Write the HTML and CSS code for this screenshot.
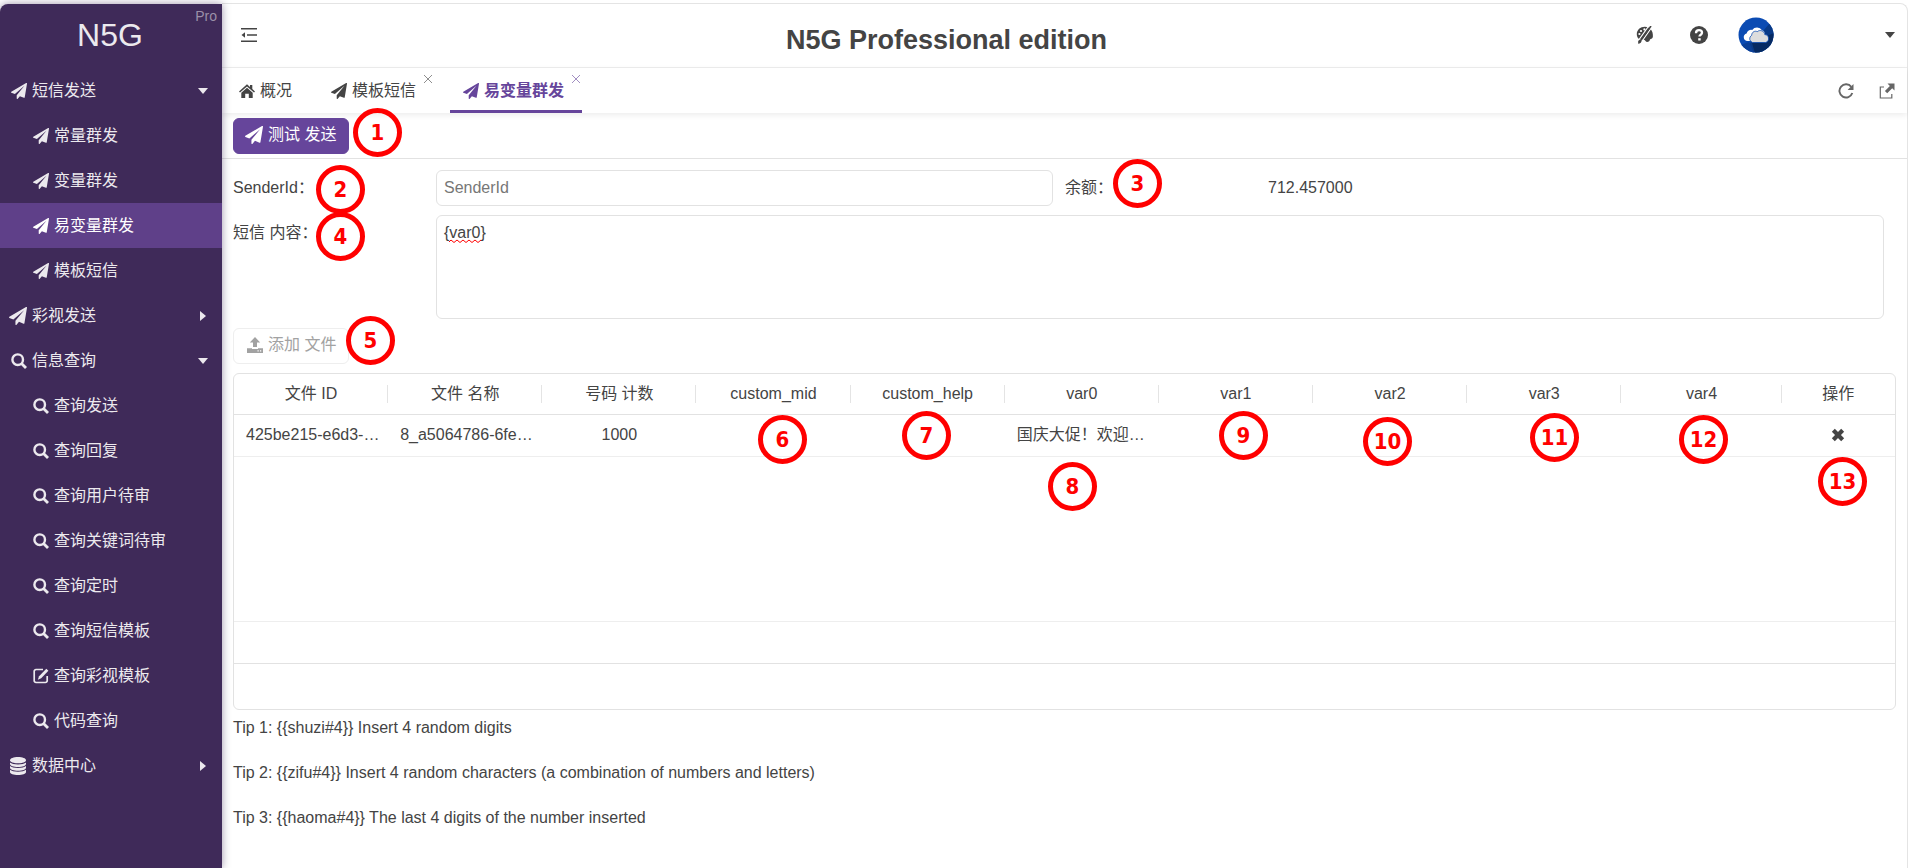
FILE: index.html
```html
<!DOCTYPE html>
<html lang="zh-CN">
<head>
<meta charset="utf-8">
<title>N5G Professional edition</title>
<link rel="stylesheet" href="styles.css">
</head>
<body>
<svg class="sprite" aria-hidden="true">
  <symbol id="plane" viewBox="0 0 1792 1792"><path d="M1764 11q33 24 27 64l-256 1536q-5 29-32 45-14 8-31 8-11 0-24-5l-453-185-242 295q-18 23-49 23-13 0-22-4-19-7-30.500-23.500t-11.500-36.500v-349l864-1059-1069 925-395-162q-37-14-40-55-2-40 32-59l1664-960q15-9 32-9 20 0 36 11z"/></symbol>
  <symbol id="search" viewBox="0 0 16 16"><circle cx="6.700" cy="6.700" r="5.300" fill="none" stroke="currentColor" stroke-width="2.400"/><path d="M10.500 10.500L15 15" stroke="currentColor" stroke-width="2.800"/></symbol>
  <symbol id="edit" viewBox="0 0 16 16"><path d="M10 1.500H3a1.800 1.800 0 0 0-1.800 1.800v9.400A1.800 1.800 0 0 0 3 14.500h9.400a1.800 1.800 0 0 0 1.800-1.800V8" fill="none" stroke="currentColor" stroke-width="1.700"/><path d="M13.300.7l2.100 2.100-7.200 7.400-3.400 1.500 1.300-3.500z"/></symbol>
  <symbol id="database" viewBox="0 0 16 18"><path d="M0 3.200C0 1.300 3.600 0 8 0s8 1.300 8 3.200S12.400 6.300 8 6.300 0 5 0 3.200z"/><path d="M0 5.400c1.400 1.300 4.400 2 8 2s6.600-.7 8-2v1.700c0 1.700-3.600 3-8 3s-8-1.300-8-3z"/><path d="M0 9.100c1.400 1.300 4.400 2 8 2s6.600-.7 8-2v1.700c0 1.700-3.600 3-8 3s-8-1.300-8-3z"/><path d="M0 12.800c1.400 1.300 4.400 2 8 2s6.600-.7 8-2v2.100C16 16.700 12.400 18 8 18s-8-1.300-8-3.100z"/></symbol>
  <symbol id="down" viewBox="0 0 10 6"><path d="M0 0h10L5 6z"/></symbol>
  <symbol id="right" viewBox="0 0 6 10"><path d="M0 0l6 5-6 5z"/></symbol>
</svg>
<div class="app">
  <aside class="sidebar">
    <div class="brand">N5G<span class="brand-tag">Pro</span></div>
    <nav class="menu">
      <a class="item" href="#"><svg class="icon"><use href="#plane"/></svg>短信发送<svg class="caret"><use href="#down"/></svg></a>
      <a class="item sub" href="#"><svg class="icon"><use href="#plane"/></svg>常量群发</a>
      <a class="item sub" href="#"><svg class="icon"><use href="#plane"/></svg>变量群发</a>
      <a class="item sub current" href="#"><svg class="icon"><use href="#plane"/></svg>易变量群发</a>
      <a class="item sub" href="#"><svg class="icon"><use href="#plane"/></svg>模板短信</a>
      <a class="item" href="#"><svg class="icon large"><use href="#plane"/></svg>彩视发送<svg class="caret"><use href="#right"/></svg></a>
      <a class="item" href="#"><svg class="icon"><use href="#search"/></svg>信息查询<svg class="caret"><use href="#down"/></svg></a>
      <a class="item sub" href="#"><svg class="icon"><use href="#search"/></svg>查询发送</a>
      <a class="item sub" href="#"><svg class="icon"><use href="#search"/></svg>查询回复</a>
      <a class="item sub" href="#"><svg class="icon"><use href="#search"/></svg>查询用户待审</a>
      <a class="item sub" href="#"><svg class="icon"><use href="#search"/></svg>查询关键词待审</a>
      <a class="item sub" href="#"><svg class="icon"><use href="#search"/></svg>查询定时</a>
      <a class="item sub" href="#"><svg class="icon"><use href="#search"/></svg>查询短信模板</a>
      <a class="item sub" href="#"><svg class="icon"><use href="#edit"/></svg>查询彩视模板</a>
      <a class="item sub" href="#"><svg class="icon"><use href="#search"/></svg>代码查询</a>
      <a class="item" href="#"><svg class="icon large"><use href="#database"/></svg>数据中心<svg class="caret"><use href="#right"/></svg></a>
    </nav>
  </aside>

  <main class="main">
    <header class="header">
      <button class="plain" type="button" aria-label="收起菜单"><svg class="icon" viewBox="0 0 16 16"><path d="M0 1h16v1.400H0zM6 7.300h10v1.400H6zM0 13.600h16V15H0zM4 5.300v5.400L.5 8z"/></svg></button>
      <h1 class="title">N5G Professional edition</h1>
      <div class="header-tools">
        <button class="plain" type="button" aria-label="主题"><svg class="icon large" viewBox="0 0 18 18"><path d="M8.800.8C4.300.8.800 4 .8 8c0 3.300 1.800 5.500 4.500 5.600 2 .1 3.600.2 4.400 1.600.7 1.200 2.400.8 3.400 0 .8-.7.5-1.900 1.500-2.300 1.300-.5 2.200-.7 2.300-2.500C17.300 5 14 .8 8.800.8z"/><g fill="#fff"><circle cx="3.400" cy="8" r="1.100"/><circle cx="5" cy="5" r="1.100"/><circle cx="8.400" cy="3.400" r="1.100"/></g><path d="M16.200.6L6.400 14.600M12.600.2L3 13.600" stroke="#fff" stroke-width="1.100"/><path d="M15 0L4.800 14.400" stroke="#444" stroke-width="1.600"/><path d="M2.200 15.200c.6-1.600 2.500-2 3.300-.9.500 1.900-1.300 3.300-3.500 3.500.5-.9-.1-1.700.2-2.600z"/></svg></button>
        <button class="plain" type="button" aria-label="帮助"><svg class="icon large" viewBox="0 0 18 18"><circle cx="9" cy="9" r="9"/><path d="M6 7.200C6 5 7.300 4.200 9 4.200s3 1 3 2.600c0 2-2.500 1.800-2.500 3.800" fill="none" stroke="#fff" stroke-width="2.300"/><path d="M8.200 12.200h2.500v2.300H8.200z" fill="#fff"/></svg></button>
        <button class="user" type="button" aria-label="用户">
          <svg class="avatar" viewBox="0 0 36 36"><defs><clipPath id="disc"><circle cx="18" cy="18" r="17.500"/></clipPath></defs><g clip-path="url(#disc)"><path d="M0 0h36v36H0z" fill="#0b4bb3"/><path d="M25 14L32 6l4 4v26H15l-4-9z" fill="#093a87"/><path d="M29 19l7-3v20H17l-3-10z" fill="#062a62"/><path d="M0 29l11-4 5 11H0z" fill="#0a3f97"/></g><path d="M9 24a3.900 3.900 0 0 1-.4-7.600 4.600 4.600 0 0 1 5.600-3.400 6 6 0 0 1 9.800.3c2 .3 2.700 2 2.700 3.600L17 24z" fill="#fff"/><path d="M14.600 25.500a3.900 3.900 0 0 1-.9-7.200c-.1-3.200 3.400-5 5.500-3.600 2.600-2.400 7.400-.8 7.600 2.900 4.100-.2 5.500 6.400 1 7.900z" fill="#ddd" stroke="#0b4bb3" stroke-width=".8"/></svg>
          <svg class="caret"><use href="#down"/></svg>
        </button>
      </div>
    </header>

    <div class="tabs">
      <div class="tab"><svg class="icon" viewBox="0 0 16 16"><path d="M8 1.200l3 2.700V2h2.300v4L16 8.500l-1 1.100L8 3.400 1 9.600 0 8.500z"/><path d="M8 4.700l5.700 5V15H9.800v-4.300H6.200V15H2.300V9.700z"/></svg><a href="#">概况</a></div>
      <div class="tab"><svg class="icon"><use href="#plane"/></svg><a href="#">模板短信</a><button class="close" type="button" aria-label="关闭"><svg viewBox="0 0 10 10"><path d="M1 1l8 8M9 1L1 9"/></svg></button></div>
      <div class="tab active"><svg class="icon"><use href="#plane"/></svg><a href="#">易变量群发</a><button class="close" type="button" aria-label="关闭"><svg viewBox="0 0 10 10"><path d="M1 1l8 8M9 1L1 9"/></svg></button></div>
      <div class="tab-tools">
        <button class="plain" type="button" aria-label="刷新"><svg class="icon" viewBox="0 0 16 16"><path d="M13.300 3.900A6.600 6.600 0 1 0 14.300 10" fill="none" stroke="currentColor" stroke-width="1.900"/><path d="M15.500 1v6H9.600z"/></svg></button>
        <button class="plain" type="button" aria-label="新窗口"><svg class="icon" viewBox="0 0 16 16"><path d="M5 4H1.300v11H12.800v-4" fill="none" stroke="currentColor" stroke-width="1.200"/><path d="M8.500.5h7v7l-2.300-2.300-5 5L5.900 8l5-5z"/></svg></button>
      </div>
    </div>

    <div class="toolbar">
      <button class="btn primary" type="button"><svg class="icon large"><use href="#plane"/></svg>测试 发送</button>
    </div>

    <form class="content">
      <div class="form">
        <label for="sender">SenderId：</label>
        <input class="field" id="sender" type="text" placeholder="SenderId">
        <span class="balance-label">余额：</span>
        <output class="balance">712.457000</output>
        <label for="body">短信 内容：</label>
        <div class="area">
          <textarea class="field" id="body" spellcheck="false">{var0}</textarea>
          <svg class="squiggle" viewBox="0 0 32 4" aria-hidden="true"><path d="M0 3l2-2 3 2.500L8 1l3 2.500L14 1l3 2.500L20 1l3 2.500L26 1l3 2.500L32 1" fill="none" stroke="#f00"/></svg>
        </div>
      </div>
      <div class="upload">
        <button class="btn" type="button" disabled><svg class="icon" viewBox="0 0 16 16"><path d="M8 0l5.200 5.500H10V10H6V5.500H2.800z"/><path fill-rule="evenodd" d="M0 11.200h5V12h6v-.8h5V16H0zM10.500 13.200v1.200h1.200v-1.200zM13 13.200v1.200h1.200v-1.200z"/></svg>添加 文件</button>
      </div>
      <div class="grid">
        <table class="table">
          <colgroup><col class="c"><col class="c"><col class="c"><col class="c"><col class="c"><col class="c"><col class="c"><col class="c"><col class="c"><col class="c-wide"><col></colgroup>
          <thead>
            <tr><th>文件 ID</th><th>文件 名称</th><th>号码 计数</th><th>custom_mid</th><th>custom_help</th><th>var0</th><th>var1</th><th>var2</th><th>var3</th><th>var4</th><th>操作</th></tr>
          </thead>
          <tbody>
            <tr><td class="text">425be215-e6d3-…</td><td class="text">8_a5064786-6fe…</td><td>1000</td><td></td><td></td><td class="text">国庆大促！欢迎…</td><td></td><td></td><td></td><td></td><td><button class="plain remove" type="button" aria-label="删除"><svg viewBox="0 0 12 12"><path d="M2 2l8 8M10 2l-8 8" stroke="currentColor" stroke-width="3.600"/></svg></button></td></tr>
          </tbody>
        </table>
        <div class="grid-space"></div>
        <div class="grid-total"></div>
        <div class="grid-foot"></div>
      </div>
      <p class="tip">Tip 1: {{shuzi#4}} Insert 4 random digits</p>
      <p class="tip">Tip 2: {{zifu#4}} Insert 4 random characters (a combination of numbers and letters)</p>
      <p class="tip">Tip 3: {{haoma#4}} The last 4 digits of the number inserted</p>
    </form>
  </main>
</div>
<span class="mark m1">1</span>
<span class="mark m2">2</span>
<span class="mark m3">3</span>
<span class="mark m4">4</span>
<span class="mark m5">5</span>
<span class="mark m6">6</span>
<span class="mark m7">7</span>
<span class="mark m8">8</span>
<span class="mark m9">9</span>
<span class="mark m10">10</span>
<span class="mark m11">11</span>
<span class="mark m12">12</span>
<span class="mark m13">13</span>
</body>
</html>
```

FILE: styles.css
```css
* { box-sizing: border-box; }

body {
  margin: 0;
  background: #fff;
  color: #444;
  font: 16px/24px "Liberation Sans", "Noto Sans CJK SC", sans-serif;
}

a { color: inherit; text-decoration: none; }
button, input, textarea { font: inherit; color: inherit; }
svg { display: block; fill: currentColor; }
.sprite { display: none; }

.app {
  display: flex;
  min-height: 100vh;
  padding-top: 3px;
}

.icon { width: 16px; height: 16px; flex: none; }
.icon.large { width: 18px; height: 18px; }
.caret { width: 10px; height: 10px; flex: none; }

.plain {
  display: flex;
  align-items: center;
  justify-content: center;
  padding: 0;
  border: 0;
  background: none;
}

/* Sidebar */
.sidebar {
  position: relative;
  z-index: 1;
  width: 222px;
  flex: none;
  margin-top: 1px;
  border-top-left-radius: 8px;
  background: #3f2a59;
  color: #ece9ee;
  box-shadow: 0 0 8px rgba(63, 42, 89, .5);
}

.brand {
  position: relative;
  height: 64px;
  padding-right: 2px;
  font-size: 32px;
  line-height: 62px;
  text-align: center;
}

.brand-tag {
  position: absolute;
  top: 3px;
  right: 5px;
  color: #9b90a8;
  font-size: 14px;
  line-height: 18px;
}

.item {
  display: flex;
  align-items: center;
  gap: 5px;
  height: 45px;
  padding: 0 14px 0 11px;
}

.item .icon.large { margin-left: -2px; }
.item .caret { margin-left: auto; }
.item.sub { padding-left: 33px; }
.item.current { background: #5f4089; color: #fff; }

/* Header */
.main {
  flex: 1;
  min-width: 0;
  border: 1px solid #e4e4e4;
  border-width: 1px 1px 0 0;
  border-top-right-radius: 8px;
}

.header {
  display: flex;
  align-items: center;
  height: 64px;
  padding: 0 12px 2px 19px;
  border-bottom: 1px solid #eee;
}

.title {
  flex: 1;
  margin: 0;
  padding-top: 10px;
  font-size: 27px;
  line-height: 32px;
  text-align: center;
}

.header-tools { display: flex; align-items: center; gap: 36px; }

.user {
  display: flex;
  align-items: center;
  justify-content: space-between;
  width: 157px;
  margin-left: -6px;
  padding: 0;
  border: 0;
  background: none;
}

.avatar { width: 36px; height: 36px; }

/* Tabs */
.tabs {
  display: flex;
  gap: 16px;
  height: 45px;
  padding: 0 12px 0 4px;
  box-shadow: 0 2px 6px rgba(0, 0, 0, .08);
}

.tab {
  position: relative;
  display: flex;
  align-items: center;
  gap: 5px;
  padding: 0 18px 0 13px;
}

.tab:first-child { padding-right: 10px; }

.tab.active {
  color: #66459b;
  font-weight: 700;
  box-shadow: inset 0 -3px #66459b;
}

.close {
  position: absolute;
  top: 6px;
  right: 1px;
  padding: 0;
  border: 0;
  background: none;
  opacity: .6;
}

.close svg { width: 10px; height: 10px; stroke: currentColor; }

.tab-tools {
  display: flex;
  align-items: center;
  gap: 25px;
  margin-left: auto;
  color: #666;
}

/* Toolbar */
.toolbar {
  display: flex;
  align-items: center;
  height: 46px;
  padding: 0 11px;
  border-bottom: 1px solid #e2e2e2;
}

.btn {
  display: flex;
  align-items: center;
  gap: 5px;
  height: 36px;
  padding: 0 12px 2px 13px;
  border: 1px solid #e4e4e4;
  border-radius: 6px;
  background: #fff;
}

.btn.primary { border-color: #66459b; background: #66459b; color: #fff; padding-left: 11px; }
.btn:disabled { border-color: #eee; color: #a2a2a2; }

/* Form */
.content { padding: 11px 11px 0 11px; }

.form {
  display: grid;
  grid-template-columns: 203px minmax(0, 617fr) 203px minmax(0, 628fr);
  row-gap: 9px;
  padding-right: 12px;
}

.form label, .balance-label, .balance { line-height: 36px; }
.balance-label, .balance { padding-left: 12px; }

.field {
  display: block;
  width: 100%;
  height: 36px;
  padding: 0 7px;
  border: 1px solid #e2e2e2;
  border-radius: 6px;
  outline: 0;
  background: #fff;
}

.field::placeholder { color: #777; }
.area { position: relative; grid-column: 2 / -1; }
.area .field { height: 104px; padding-top: 5px; resize: none; }

.squiggle {
  position: absolute;
  top: 24px;
  left: 13px;
  width: 32px;
  height: 4px;
}

.upload { display: flex; padding: 9px 0; }

/* File grid */
.grid {
  border: 1px solid #e2e2e2;
  border-radius: 6px;
}

.table {
  width: 100%;
  table-layout: fixed;
  border-collapse: separate;
  border-spacing: 0;
}

.c { width: 9.280%; }
.c-wide { width: 9.660%; }

.table th, .table td {
  height: 41px;
  padding: 0 12px;
  border-bottom: 1px solid #e2e2e2;
  font-weight: 400;
  text-align: center;
  white-space: nowrap;
}

.table th {
  background: linear-gradient(#e4e4e4, #e4e4e4) right center / 1px 18px no-repeat;
}

.table th:last-child { background: none; }
.table td { height: 42px; padding-bottom: 2px; border-color: #eee; }
.table .text { text-align: left; }
.remove { margin: auto; }
.remove svg { width: 14px; height: 14px; }
.grid-space { height: 164px; }
.grid-total { height: 43px; border: 1px solid #eee; border-width: 1px 0; border-bottom-color: #e2e2e2; }
.grid-foot { height: 45px; }

.tip { margin: 6px 0 21px; }

/* Numbered markers over the page */
.mark {
  position: absolute;
  z-index: 2;
  width: 49px;
  height: 49px;
  border: 5px solid #f00;
  border-radius: 50%;
  color: #f00;
  font: 700 22px/39px "DejaVu Sans Condensed", "DejaVu Sans", sans-serif;
  text-align: center;
}

.m1 { left: 353px; top: 108px; }
.m2 { left: 316px; top: 165px; }
.m3 { left: 1113px; top: 159px; }
.m4 { left: 316px; top: 212px; }
.m5 { left: 346px; top: 316px; }
.m6 { left: 758px; top: 415px; }
.m7 { left: 902px; top: 411px; }
.m8 { left: 1048px; top: 462px; }
.m9 { left: 1219px; top: 411px; }
.m10 { left: 1363px; top: 417px; }
.m11 { left: 1530px; top: 413px; }
.m12 { left: 1679px; top: 415px; }
.m13 { left: 1818px; top: 457px; }
```
